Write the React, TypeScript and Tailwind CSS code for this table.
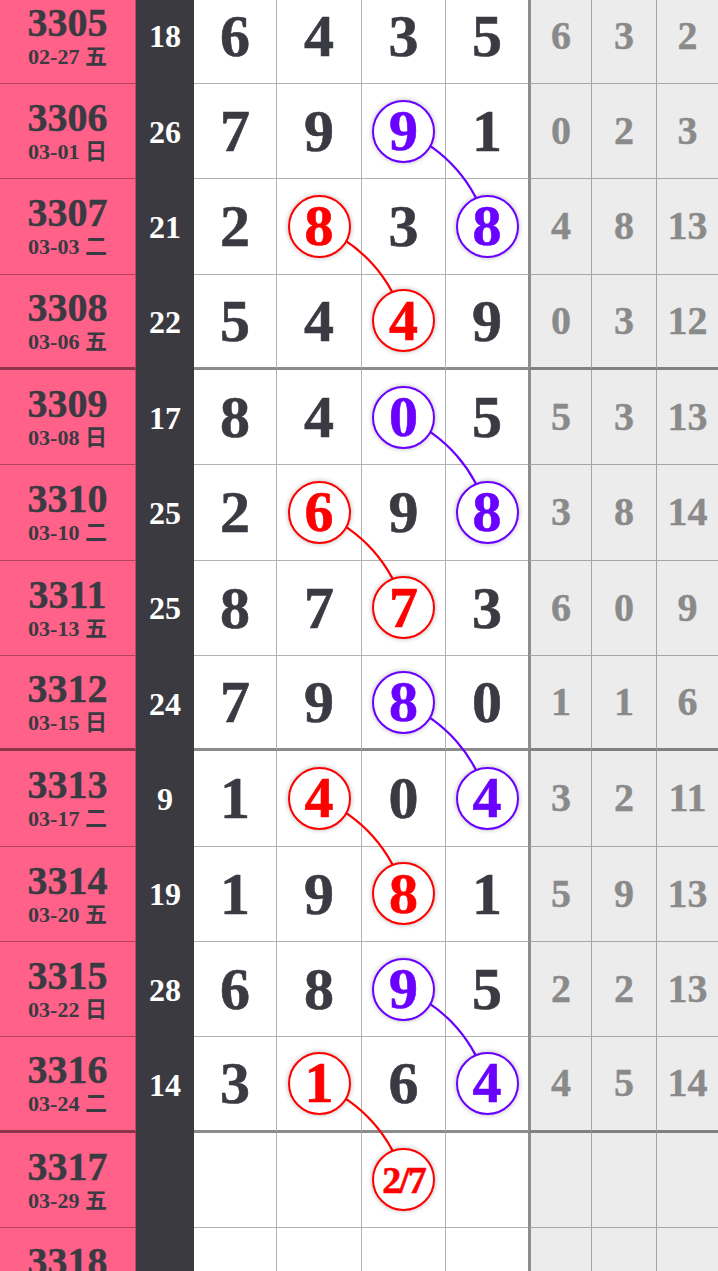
import clsx from "clsx";

type Mark = "r" | "b" | undefined;
type Cell = { v: string; m?: Mark };

type Row = {
  no: string;
  date: string;
  sum: string;
  nums: Cell[];
  tail: string[];
};

const n = (v: string, m?: Mark): Cell => ({ v, m });

const rows: Row[] = [
  { no: "3305", date: "02-27 五", sum: "18", nums: [n("6"), n("4"), n("3"), n("5")], tail: ["6", "3", "2"] },
  { no: "3306", date: "03-01 日", sum: "26", nums: [n("7"), n("9"), n("9", "b"), n("1")], tail: ["0", "2", "3"] },
  { no: "3307", date: "03-03 二", sum: "21", nums: [n("2"), n("8", "r"), n("3"), n("8", "b")], tail: ["4", "8", "13"] },
  { no: "3308", date: "03-06 五", sum: "22", nums: [n("5"), n("4"), n("4", "r"), n("9")], tail: ["0", "3", "12"] },
  { no: "3309", date: "03-08 日", sum: "17", nums: [n("8"), n("4"), n("0", "b"), n("5")], tail: ["5", "3", "13"] },
  { no: "3310", date: "03-10 二", sum: "25", nums: [n("2"), n("6", "r"), n("9"), n("8", "b")], tail: ["3", "8", "14"] },
  { no: "3311", date: "03-13 五", sum: "25", nums: [n("8"), n("7"), n("7", "r"), n("3")], tail: ["6", "0", "9"] },
  { no: "3312", date: "03-15 日", sum: "24", nums: [n("7"), n("9"), n("8", "b"), n("0")], tail: ["1", "1", "6"] },
  { no: "3313", date: "03-17 二", sum: "9", nums: [n("1"), n("4", "r"), n("0"), n("4", "b")], tail: ["3", "2", "11"] },
  { no: "3314", date: "03-20 五", sum: "19", nums: [n("1"), n("9"), n("8", "r"), n("1")], tail: ["5", "9", "13"] },
  { no: "3315", date: "03-22 日", sum: "28", nums: [n("6"), n("8"), n("9", "b"), n("5")], tail: ["2", "2", "13"] },
  { no: "3316", date: "03-24 二", sum: "14", nums: [n("3"), n("1", "r"), n("6"), n("4", "b")], tail: ["4", "5", "14"] },
  { no: "3317", date: "03-29 五", sum: "", nums: [n(""), n(""), n("2/7", "r"), n("")], tail: ["", "", ""] },
  { no: "3318", date: "03-31 日", sum: "", nums: [n(""), n(""), n(""), n("")], tail: ["", "", ""] },
];

const ROW_H = 95.33;
const colX = [235.5, 319.5, 404, 487];

// 连线: [起始行, 起始列, 结束行, 结束列, 颜色]
const links: [number, number, number, number, string][] = [
  [1, 2, 2, 3, "#6a00ff"],
  [2, 1, 3, 2, "#ff0000"],
  [4, 2, 5, 3, "#6a00ff"],
  [5, 1, 6, 2, "#ff0000"],
  [7, 2, 8, 3, "#6a00ff"],
  [8, 1, 9, 2, "#ff0000"],
  [10, 2, 11, 3, "#6a00ff"],
  [11, 1, 12, 2, "#ff0000"],
];

function Circled({ cell }: { cell: Cell }) {
  const red = cell.m === "r";
  const small = cell.v.length > 1;
  return (
    <div
      className={clsx(
        "relative z-10 flex h-[63px] w-[63px] items-center justify-center rounded-full border-[2.5px] bg-white shadow-[0_0_5px_rgba(0,0,0,0.3)]",
        red ? "border-[#ff0000] text-[#ff0000]" : "border-[#6a00ff] text-[#6a00ff]"
      )}
    >
      <span className={clsx("leading-none [-webkit-text-stroke:0.6px_currentcolor]", small ? "text-[38px] tracking-[-2px]" : "text-[58px]")}>{cell.v}</span>
    </div>
  );
}

export default function App() {
  return (
    <div className="h-[1271px] w-[718px] overflow-hidden bg-white font-bold font-[family-name:'Liberation_Serif','Noto_Sans_CJK_SC',serif]">
      <div className="relative -mt-[11.33px]">
        {rows.map((row, i) => {
          const thick = i % 4 === 3;
          const bb = thick ? "border-b-[3px] border-b-black/45" : "border-b border-b-black/30";
          return (
            <div key={row.no} className="grid h-[95.33px] grid-cols-[136px_58px_83px_85px_84px_82px_64px_65px_61px]">
              {/* 期号 */}
              <div className={clsx("flex flex-col items-center justify-center gap-[2px] border-r border-r-black/25 bg-[#ff6188] text-[#3a3a42]", bb)}>
                <span className="text-[40px] leading-[40px] [-webkit-text-stroke:0.4px_currentcolor]">{row.no}</span>
                <span className="text-[22px] leading-[24px]">{row.date}</span>
              </div>
              {/* 和值 */}
              <div className="flex items-center justify-center bg-[#3a3a40] text-[32px] leading-none text-white">{row.sum}</div>
              {/* 号码 */}
              {row.nums.map((c, j) => (
                <div
                  key={j}
                  className={clsx(
                    "flex items-center justify-center bg-white text-[60px] leading-none text-[#3a3a42] [-webkit-text-stroke:0.6px_currentcolor]",
                    bb,
                    j < 3 && "border-r border-r-black/30"
                  )}
                >
                  {c.m ? <Circled cell={c} /> : c.v}
                </div>
              ))}
              {/* 跨度 */}
              {row.tail.map((t, j) => (
                <div
                  key={j}
                  className={clsx(
                    "flex items-center justify-center bg-[#ececec] text-[40px] leading-none text-[#8a8a8a] [-webkit-text-stroke:0.4px_currentcolor]",
                    bb,
                    j === 0 && "border-l-[3px] border-l-black/40",
                    j < 2 && "border-r border-r-black/30"
                  )}
                >
                  {t}
                </div>
              ))}
            </div>
          );
        })}
        <svg className="pointer-events-none absolute left-0 top-0" width={718} height={ROW_H * rows.length}>
          {links.map(([r1, c1, r2, c2, color], k) => {
            const x1 = colX[c1];
            const y1 = r1 * ROW_H + ROW_H / 2;
            const x2 = colX[c2];
            const y2 = r2 * ROW_H + ROW_H / 2;
            return <path key={k} d={`M${x1} ${y1} A140 140 0 0 1 ${x2} ${y2}`} fill="none" stroke={color} strokeWidth={2.2} />;
          })}
        </svg>
      </div>
    </div>
  );
}
